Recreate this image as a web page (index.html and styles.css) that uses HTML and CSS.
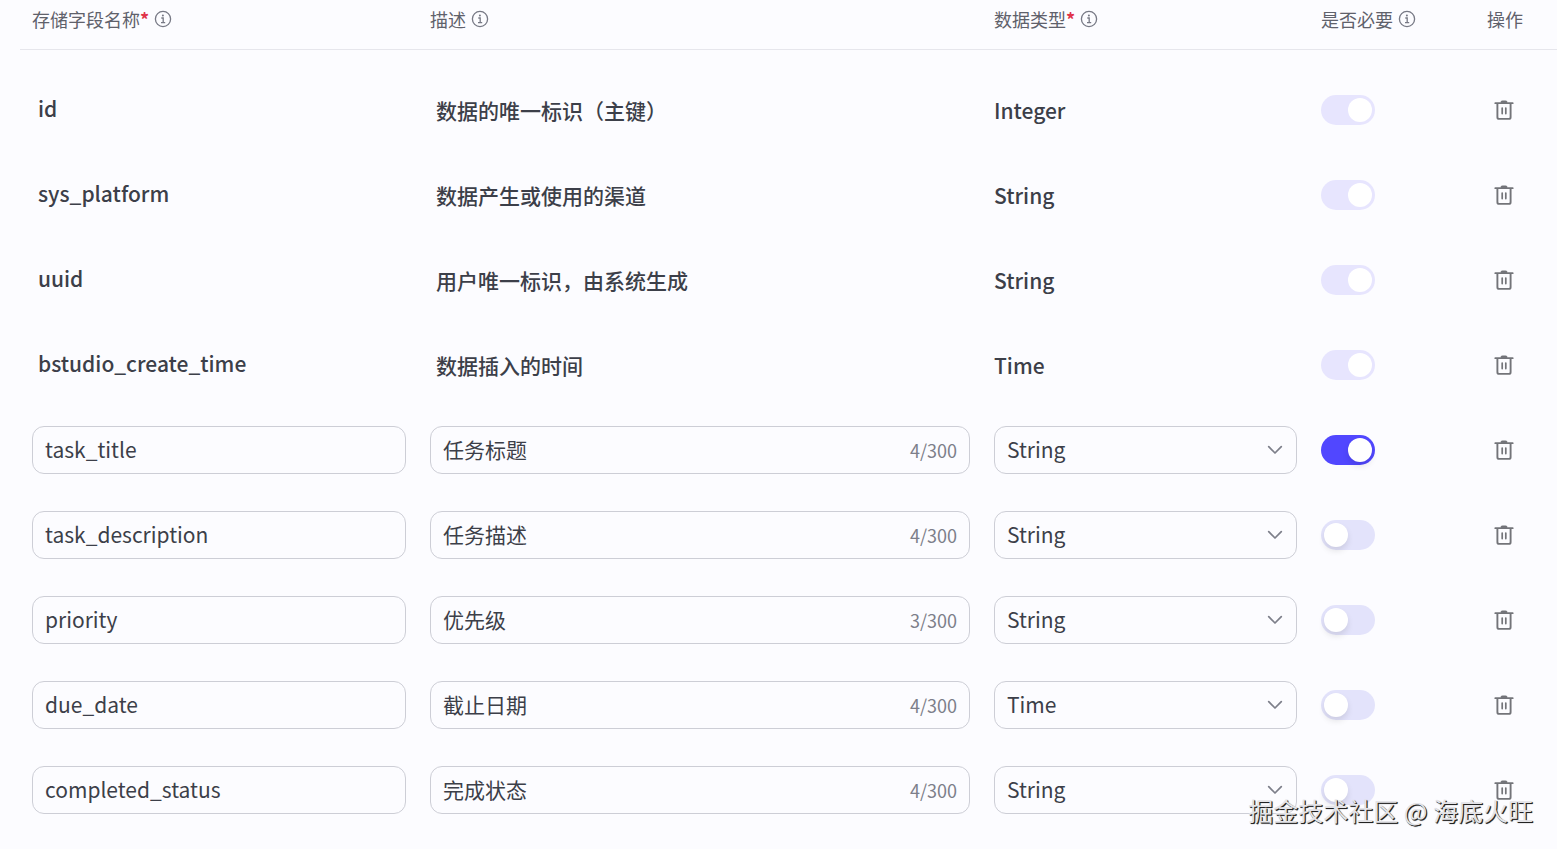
FILE: index.html
```html
<!DOCTYPE html>
<html lang="zh-CN">
<head>
    <meta charset="UTF-8">
    <meta name="viewport" content="width=device-width, initial-scale=1.0">
    <title>存储字段</title>
    <link rel="stylesheet" href="styles.css">
</head>
<body>
    <!-- shared icons -->
    <svg class="sprite" aria-hidden="true">
        <symbol id="icon-info" viewBox="0 0 18 18">
            <circle cx="9" cy="9" r="7.6" fill="none" stroke="currentColor" stroke-width="1.3"/>
            <circle cx="8.9" cy="5.5" r="1" fill="currentColor"/>
            <path d="M7.3 8h1.9v4.6M7 12.7h4.2" fill="none" stroke="currentColor" stroke-width="1.3"/>
        </symbol>
        <symbol id="icon-trash" viewBox="0 0 20 22">
            <path d="M7 3.4V3c0-.7.5-1 1.200-1h3.600c.7 0 1.200.3 1.200 1v.4z" fill="currentColor" stroke="currentColor"/>
            <path d="M1.300 4.200h17.400" fill="none" stroke="currentColor" stroke-width="1.800" stroke-linecap="round"/>
            <path d="M3.400 4.200v14c0 1 .7 1.700 1.700 1.700h9.800c1 0 1.700-.7 1.700-1.700v-14" fill="none" stroke="currentColor" stroke-width="1.900"/>
            <path d="M8.200 9v5.600M11.800 9v5.600" fill="none" stroke="currentColor" stroke-width="1.700" stroke-linecap="round"/>
        </symbol>
        <symbol id="icon-arrow" viewBox="0 0 16 10">
            <path d="M1.7 1.6L8 8l6.300-6.400" fill="none" stroke="currentColor" stroke-width="1.700" stroke-linecap="round" stroke-linejoin="round"/>
        </symbol>
    </svg>

    <form class="container">
        <table class="fields">
            <colgroup>
                <col class="col-name">
                <col class="col-desc">
                <col class="col-type">
                <col class="col-required">
                <col class="col-action">
            </colgroup>
            <thead>
                <tr>
                    <th><span class="head">存储字段名称<span class="star">*</span><svg class="info"><use href="#icon-info"/></svg></span></th>
                    <th><span class="head">描述<svg class="info"><use href="#icon-info"/></svg></span></th>
                    <th><span class="head">数据类型<span class="star">*</span><svg class="info"><use href="#icon-info"/></svg></span></th>
                    <th><span class="head">是否必要<svg class="info"><use href="#icon-info"/></svg></span></th>
                    <th><span class="head">操作</span></th>
                </tr>
            </thead>
            <tbody>
                <!-- system fields -->
                <tr>
                    <td class="sys-name">id</td>
                    <td class="sys-desc">数据的唯一标识（主键）</td>
                    <td class="sys-type">Integer</td>
                    <td><input type="checkbox" class="switch" aria-label="是否必要" checked disabled></td>
                    <td><button type="button" class="delete" aria-label="删除"><svg><use href="#icon-trash"/></svg></button></td>
                </tr>
                <tr>
                    <td class="sys-name">sys_platform</td>
                    <td class="sys-desc">数据产生或使用的渠道</td>
                    <td class="sys-type">String</td>
                    <td><input type="checkbox" class="switch" aria-label="是否必要" checked disabled></td>
                    <td><button type="button" class="delete" aria-label="删除"><svg><use href="#icon-trash"/></svg></button></td>
                </tr>
                <tr>
                    <td class="sys-name">uuid</td>
                    <td class="sys-desc">用户唯一标识，由系统生成</td>
                    <td class="sys-type">String</td>
                    <td><input type="checkbox" class="switch" aria-label="是否必要" checked disabled></td>
                    <td><button type="button" class="delete" aria-label="删除"><svg><use href="#icon-trash"/></svg></button></td>
                </tr>
                <tr>
                    <td class="sys-name">bstudio_create_time</td>
                    <td class="sys-desc">数据插入的时间</td>
                    <td class="sys-type">Time</td>
                    <td><input type="checkbox" class="switch" aria-label="是否必要" checked disabled></td>
                    <td><button type="button" class="delete" aria-label="删除"><svg><use href="#icon-trash"/></svg></button></td>
                </tr>

                <!-- custom fields -->
                <tr>
                    <td><div class="box"><input type="text" aria-label="存储字段名称" value="task_title"></div></td>
                    <td><div class="box"><input type="text" aria-label="描述" value="任务标题"><span class="count">4/300</span></div></td>
                    <td><div class="box"><select aria-label="数据类型"><option selected>String</option><option>Integer</option><option>Time</option></select><svg class="arrow"><use href="#icon-arrow"/></svg></div></td>
                    <td><input type="checkbox" class="switch" aria-label="是否必要" checked></td>
                    <td><button type="button" class="delete" aria-label="删除"><svg><use href="#icon-trash"/></svg></button></td>
                </tr>
                <tr>
                    <td><div class="box"><input type="text" aria-label="存储字段名称" value="task_description"></div></td>
                    <td><div class="box"><input type="text" aria-label="描述" value="任务描述"><span class="count">4/300</span></div></td>
                    <td><div class="box"><select aria-label="数据类型"><option selected>String</option><option>Integer</option><option>Time</option></select><svg class="arrow"><use href="#icon-arrow"/></svg></div></td>
                    <td><input type="checkbox" class="switch" aria-label="是否必要"></td>
                    <td><button type="button" class="delete" aria-label="删除"><svg><use href="#icon-trash"/></svg></button></td>
                </tr>
                <tr>
                    <td><div class="box"><input type="text" aria-label="存储字段名称" value="priority"></div></td>
                    <td><div class="box"><input type="text" aria-label="描述" value="优先级"><span class="count">3/300</span></div></td>
                    <td><div class="box"><select aria-label="数据类型"><option selected>String</option><option>Integer</option><option>Time</option></select><svg class="arrow"><use href="#icon-arrow"/></svg></div></td>
                    <td><input type="checkbox" class="switch" aria-label="是否必要"></td>
                    <td><button type="button" class="delete" aria-label="删除"><svg><use href="#icon-trash"/></svg></button></td>
                </tr>
                <tr>
                    <td><div class="box"><input type="text" aria-label="存储字段名称" value="due_date"></div></td>
                    <td><div class="box"><input type="text" aria-label="描述" value="截止日期"><span class="count">4/300</span></div></td>
                    <td><div class="box"><select aria-label="数据类型"><option>String</option><option>Integer</option><option selected>Time</option></select><svg class="arrow"><use href="#icon-arrow"/></svg></div></td>
                    <td><input type="checkbox" class="switch" aria-label="是否必要"></td>
                    <td><button type="button" class="delete" aria-label="删除"><svg><use href="#icon-trash"/></svg></button></td>
                </tr>
                <tr>
                    <td><div class="box"><input type="text" aria-label="存储字段名称" value="completed_status"></div></td>
                    <td><div class="box"><input type="text" aria-label="描述" value="完成状态"><span class="count">4/300</span></div></td>
                    <td><div class="box"><select aria-label="数据类型"><option selected>String</option><option>Integer</option><option>Time</option></select><svg class="arrow"><use href="#icon-arrow"/></svg></div></td>
                    <td><input type="checkbox" class="switch" aria-label="是否必要"></td>
                    <td><button type="button" class="delete" aria-label="删除"><svg><use href="#icon-trash"/></svg></button></td>
                </tr>
            </tbody>
        </table>
        <div class="watermark">掘金技术社区 @ 海底火旺</div>
    </form>
</body>
</html>
```
FILE: styles.css
```css
* {
    box-sizing: border-box;
}

body {
    margin: 0;
    font-family: "Noto Sans CJK SC", sans-serif;
    color: #3c3f49;
    background-color: #fcfcff;
}

.sprite {
    display: none;
}

.container {
    position: relative;
    padding: 0 0 16px 20px;
}

.fields {
    width: 100%;
    table-layout: fixed;
    border-collapse: separate;
    border-spacing: 0;
}

.col-name {
    width: 398px;
}

.col-type {
    width: 327px;
}

.col-required {
    width: 166px;
}

.col-action {
    width: 82px;
}

th {
    height: 50px;
    padding: 0 12px 12px;
    border-bottom: 1px solid #e6e6ec;
    font-size: 18px;
    font-weight: 400;
    line-height: 24px;
    text-align: left;
    white-space: nowrap;
    color: #5f616b;
}

.head {
    display: flex;
    align-items: center;
}

.star {
    font-weight: 700;
    color: #e0344a;
}

.info {
    width: 18px;
    height: 18px;
    margin-left: 5px;
    color: #777985;
}

/* space between the header line and the first row */
tbody::before {
    content: "";
    display: block;
    height: 17px;
}

td {
    height: 85px;
    padding: 0 12px;
    vertical-align: middle;
}

.sys-name,
.sys-desc,
.sys-type {
    font-size: 21px;
    font-weight: 500;
}

.sys-name {
    padding-left: 18px;
    padding-bottom: 4px;
}

.sys-desc {
    padding-left: 18px;
}

.box {
    position: relative;
    display: flex;
    align-items: center;
    height: 48px;
    border: 1px solid #cdced6;
    border-radius: 12px;
}

.box input,
.box select {
    flex: 1;
    min-width: 0;
    height: 46px;
    padding: 0 12px 1px;
    border: none;
    outline: none;
    border-radius: 12px;
    background: transparent;
    font-family: inherit;
    font-size: 21px;
    color: inherit;
}

.box select {
    appearance: none;
    cursor: pointer;
}

.count {
    padding-right: 12px;
    font-size: 18px;
    color: #7d7f8a;
}

.arrow {
    position: absolute;
    right: 13px;
    width: 16px;
    height: 10px;
    color: #7d7f8a;
    pointer-events: none;
}

.switch {
    appearance: none;
    display: block;
    width: 54px;
    height: 30px;
    margin: 0;
    padding: 3px;
    border-radius: 15px;
    background-color: #e3e3fb;
    cursor: pointer;
}

.switch::before {
    content: "";
    display: block;
    width: 24px;
    height: 24px;
    border-radius: 50%;
    background-color: #fff;
    box-shadow: 0 4px 6px rgba(0, 0, 0, 0.1);
}

.switch:checked {
    background-color: #5147ff;
}

.switch:checked::before {
    margin-left: auto;
}

.switch:disabled {
    background-color: #e7e5fe;
    cursor: default;
}

.switch:disabled::before {
    box-shadow: none;
}

.delete {
    display: block;
    margin-left: 7px;
    padding: 0;
    border: none;
    background: none;
    color: #737479;
    cursor: pointer;
}

.delete svg {
    display: block;
    width: 20px;
    height: 22px;
}

.watermark {
    position: absolute;
    right: 24px;
    bottom: 20px;
    font-size: 25px;
    line-height: 36px;
    color: #e4e4e8;
    text-shadow: 1px 1px 0 #222, 1px 1px 1px #444;
    pointer-events: none;
}
```
